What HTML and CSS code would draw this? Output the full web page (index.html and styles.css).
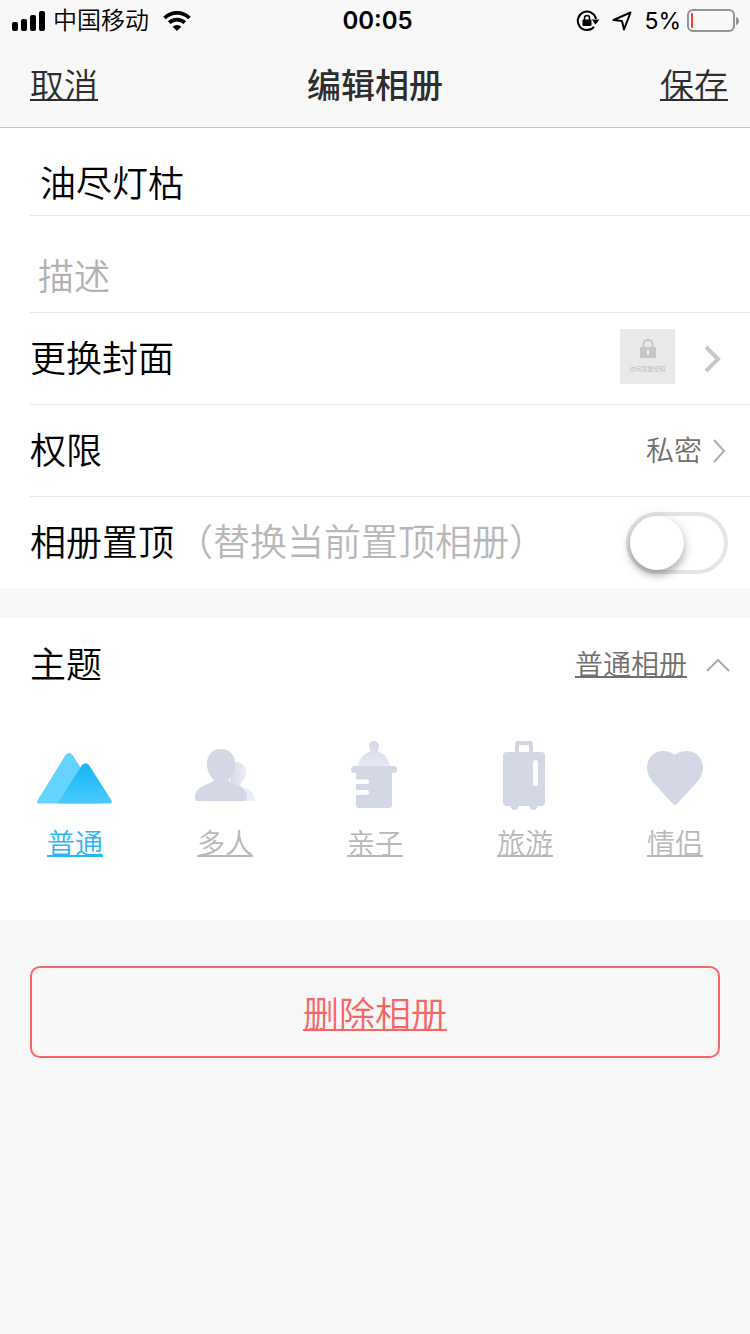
FILE: index.html
```html
<!DOCTYPE html>
<html lang="zh-CN">
<head>
  <meta charset="UTF-8">
  <meta name="viewport" content="width=device-width, initial-scale=1">
  <title>编辑相册</title>
  <link rel="stylesheet" href="styles.css">
</head>
<body>
  <header class="top">
    <div class="status">
      <div class="status-left">
        <svg width="34" height="20" viewBox="0 0 34 20"><rect x="0" y="11" width="6" height="9" rx="2"/><rect x="9" y="8" width="6" height="12" rx="2"/><rect x="18" y="4" width="6" height="16" rx="2"/><rect x="27" y="0" width="6" height="20" rx="2"/></svg>
        <span class="carrier">中国移动</span>
        <svg class="wifi" width="28" height="20" viewBox="0 0 28 20"><path d="M14 20l-4.300-4.300a6.200 6.200 0 0 1 8.600 0z"/><path d="M6.200 11.700a11.300 11.300 0 0 1 15.600 0M1.500 7a18 18 0 0 1 25 0" fill="none" stroke="#000" stroke-width="3.800"/></svg>
      </div>
      <span class="time">00:05</span>
      <div class="status-right">
        <svg class="lock" width="24" height="22" viewBox="0 0 24 22"><path d="M20 9a9.200 9.200 0 1 0-2 7.800" fill="none" stroke="#000" stroke-width="2"/><path d="M15.800 9.500h7.700l-3.900 5z"/><rect x="6.500" y="9.500" width="9" height="6.500" rx="1"/><path d="M8.500 10V8a2.500 2.500 0 0 1 5 0v2" fill="none" stroke="#000" stroke-width="1.500"/></svg>
        <svg class="arrow" width="20" height="20" viewBox="0 0 20 20"><path d="M1.500 9L18.500 1.500 12 18.500 10 10z" fill="none" stroke="#000" stroke-width="2" stroke-linejoin="round"/></svg>
        <span class="percent">5%</span>
        <svg width="52" height="24" viewBox="0 0 52 24"><rect x="1" y="1" width="46" height="21" rx="5" fill="none" stroke="#949494" stroke-width="2"/><rect x="4" y="4" width="2" height="15" rx="1" fill="#ff3b30"/><path d="M49 8q3 1 3 4t-3 4z" fill="#949494"/></svg>
      </div>
    </div>
    <nav class="nav">
      <a href="#cancel">取消</a>
      <h1>编辑相册</h1>
      <a href="#save">保存</a>
    </nav>
  </header>

  <main>
    <section class="card">
      <div class="row row-name">
        <input class="field" type="text" aria-label="相册名称" value="油尽灯枯">
      </div>
      <div class="row row-desc">
        <input class="field" type="text" aria-label="描述" placeholder="描述">
      </div>
      <div class="row">
        <span>更换封面</span>
        <div class="cover">
          <svg width="18" height="20" viewBox="0 0 18 20"><path d="M4.500 9V5.500a4.500 4.500 0 0 1 9 0V9" fill="none" stroke="#c6c6c6" stroke-width="2"/><rect x="1" y="8" width="16" height="11" rx="1" fill="#c6c6c6"/><path d="M9 11v5" stroke="#efefef" stroke-width="2"/></svg>
          <span>访问需要密码</span>
        </div>
        <svg class="chevron-bold" width="18" height="28" viewBox="0 0 18 28"><path d="M2 2l12 12L2 26" fill="none" stroke="#c7c7cc" stroke-width="4"/></svg>
      </div>
      <div class="row">
        <span>权限</span>
        <span class="value">私密</span>
        <svg class="chevron" width="14" height="24" viewBox="0 0 14 24"><path d="M2 1l10 11L2 23" fill="none" stroke="#adadad" stroke-width="2"/></svg>
      </div>
      <div class="row row-last">
        <label for="pin">相册置顶</label>
        <span class="hint">（替换当前置顶相册）</span>
        <input class="switch" type="checkbox" role="switch" id="pin">
      </div>
    </section>

    <section class="card theme">
      <div class="theme-head">
        <h2>主题</h2>
        <a href="#themes">普通相册</a>
        <svg width="24" height="14" viewBox="0 0 24 14"><path d="M1 13L12 2l11 11" fill="none" stroke="#adadad" stroke-width="2"/></svg>
      </div>
      <div class="theme-list">
        <a class="active" href="#normal" aria-current="true">
          <svg width="80" height="76" viewBox="0 0 80 76">
            <defs><linearGradient id="peak" x1="0" y1="0" x2="0" y2="1"><stop offset="0" stop-color="#12b5f5"/><stop offset="1" stop-color="#49caff"/></linearGradient></defs>
            <path d="M30.500 19q3.500-4 7 0L68 66q0 1.500-2 1.500H4q-3 0-1.500-3z" fill="#65d2ff"/>
            <path d="M47 29q3.500-3.500 7 0l22.500 35.500q1 3-1.500 3H22.500z" fill="url(#peak)"/>
          </svg>
          普通
        </a>
        <a href="#group">
          <svg width="80" height="76" viewBox="0 0 80 76">
            <defs><linearGradient id="back" x1="0" y1="0" x2="1" y2="0"><stop offset="0" stop-color="#d8dbe8"/><stop offset="0.700" stop-color="#eceef7"/></linearGradient></defs>
            <path d="M50 26c7 0 11 4 11 10 0 6-3 9-5 11-1 1-1 3 1 4 8 3 13 6 13 14H45V26z" fill="url(#back)"/>
            <path d="M36 13c9 0 14 6 14 15 0 7-3 12-6 15-1 2 0 3 3 4 9 3 15 7 15 14 0 3-1 4-3 4H13c-2 0-3-1-3-4 0-7 6-11 15-14 3-1 4-2 3-4-3-3-6-8-6-15 0-9 5-15 14-15z" fill="#d4d8e5"/>
          </svg>
          多人
        </a>
        <a href="#family">
          <svg width="80" height="76" viewBox="0 0 80 76">
            <defs><linearGradient id="dome" x1="0" y1="0" x2="0" y2="1"><stop offset="0" stop-color="#d4d8e5"/><stop offset="1" stop-color="#e6e9f4"/></linearGradient></defs>
            <path d="M39 5a5 5 0 0 1 4 8v3c6 1 11 7 12 14H23c1-7 6-13 12-14v-3a5 5 0 0 1 4-8z" fill="url(#dome)"/>
            <path d="M19.500 30h39a3.500 3.500 0 0 1 0 7H57v32q0 3-3 3H24q-3 0-3-3V59h11q2 0 2-2.500T32 54H21v-6h11q2 0 2-2.300T32 43.500H21V37h-1.500a3.500 3.500 0 0 1 0-7z" fill="#d4d8e5"/>
          </svg>
          亲子
        </a>
        <a href="#travel">
          <svg width="80" height="76" viewBox="0 0 80 76">
            <path d="M32 18V7h14v11" fill="none" stroke="#d4d8e5" stroke-width="4" stroke-linejoin="round"/>
            <rect x="18" y="16" width="42" height="54" rx="4" fill="#d4d8e5"/>
            <path d="M25 69h9q-1 5-4.500 5T25 69zM44 69h9q-1 5-4.500 5T44 69z" fill="#d4d8e5"/>
            <rect x="48" y="24" width="5" height="26" rx="2.500" fill="#fff"/>
          </svg>
          旅游
        </a>
        <a href="#couple">
          <svg width="80" height="76" viewBox="0 0 80 76">
            <path d="M40 19c4-3 7-4 12-4 9 0 16 7 16 17 0 5-2 9-5 13L42 68q-2 2-4 0L17 45c-3-4-5-8-5-13 0-10 7-17 16-17 5 0 8 1 12 4z" fill="#d4d8e5"/>
          </svg>
          情侣
        </a>
      </div>
    </section>

    <button class="delete" type="button">删除相册</button>
  </main>
</body>
</html>
```
FILE: styles.css
```css
* {
  box-sizing: border-box;
}
body {
  margin: 0;
  min-height: 100vh;
  background-color: #f7f7f7;
  color: #000;
  font-family: Inter, "Noto Sans CJK SC", sans-serif;
  font-size: 36px;
  font-weight: 350;
  line-height: 48px;
}
svg {
  display: block;
  flex: none;
}
a,
.delete {
  text-decoration: underline;
  text-decoration-thickness: 2px;
  text-decoration-skip-ink: none;
  text-underline-offset: 1px;
}
.top {
  background-color: #f8f8f8;
  border-bottom: 1px solid #c4c4c4;
}
.status {
  display: grid;
  grid-template-columns: 1fr auto 1fr;
  align-items: center;
  height: 42px;
  padding: 0 11px 0 12px;
  font-size: 24px;
  line-height: 42px;
}
.status-left,
.status-right {
  display: flex;
  align-items: center;
}
.status-right {
  justify-content: flex-end;
}
.carrier {
  margin-left: 7px;
}
.wifi {
  margin-left: 14px;
}
.time {
  padding-left: 4px;
  font-weight: 600;
}
.lock {
  margin-right: 12px;
}
.arrow {
  margin-right: 12px;
}
.percent {
  margin-right: 6px;
  font-size: 23px;
  font-weight: 400;
}
.nav {
  display: grid;
  grid-template-columns: 1fr auto 1fr;
  align-items: center;
  height: 85px;
  padding: 2px 22px 0;
  font-size: 34px;
}
.nav a {
  color: #2e2e2e;
}
.nav a:first-child {
  margin-left: 8px;
}
.nav a:last-child {
  text-align: right;
}
.nav h1 {
  margin: 0;
  color: #2e2e2e;
  font-size: 34px;
  font-weight: 500;
}
.card {
  background-color: #fff;
}
.row {
  display: flex;
  align-items: center;
  height: 92px;
  margin-left: 30px;
  padding-right: 22px;
  border-bottom: 1px solid #e5e5e5;
}
.row-name {
  height: 88px;
  padding-top: 18px;
}
.row-desc {
  height: 97px;
  padding-top: 26px;
}
.row-last {
  height: 91px;
  border-bottom: none;
}
.field {
  flex: 1;
  min-width: 0;
  height: 60px;
  padding: 0 10px;
  border: none;
  outline: none;
  background: none;
  color: inherit;
  font: inherit;
}
.row-desc .field {
  padding: 0 8px;
}
.field::placeholder {
  color: #b2b2b2;
  opacity: 1;
}
.cover {
  display: flex;
  flex-direction: column;
  align-items: center;
  justify-content: center;
  gap: 2px;
  width: 55px;
  height: 55px;
  margin: 0 0 5px auto;
  padding-top: 4px;
  background-color: #e9e9e9;
}
.cover span {
  color: #b8b8b8;
  font-size: 6px;
  line-height: 16px;
}
.chevron-bold {
  margin: 0 6px 0 29px;
}
.value {
  margin-left: auto;
  color: #707070;
  font-size: 28px;
}
.chevron {
  margin: 0 2px 0 10px;
}
.hint {
  margin-left: 2px;
  color: #b8b8b8;
  font-size: 37px;
}
.switch {
  appearance: none;
  width: 102px;
  height: 62px;
  margin: 0 0 0 auto;
  border: 4px solid #e5e5e5;
  border-radius: 31px;
  background-color: #fff;
}
.switch::before {
  content: '';
  display: block;
  width: 54px;
  height: 54px;
  border-radius: 50%;
  background-color: #fff;
  box-shadow: 0 5px 8px rgba(0, 0, 0, 0.3), 0 0 16px rgba(0, 0, 0, 0.08);
}
.switch:checked {
  background-color: #4cd964;
}
.switch:checked::before {
  margin-left: 40px;
}
.theme {
  margin-top: 30px;
  padding-bottom: 52px;
}
.theme-head {
  display: flex;
  align-items: center;
  height: 94px;
  padding: 0 20px 0 30px;
}
.theme-head h2 {
  margin: 0;
  font-size: 36px;
  font-weight: 350;
}
.theme-head a {
  margin: 0 19px 0 auto;
  color: #707070;
  font-size: 28px;
}
.theme-list {
  display: grid;
  grid-template-columns: repeat(5, 1fr);
  padding-top: 24px;
}
.theme-list a {
  display: flex;
  flex-direction: column;
  align-items: center;
  gap: 8px;
  color: #b8b8b8;
  font-size: 28px;
}
.theme-list .active {
  color: #29b6f6;
}
.delete {
  display: block;
  width: calc(100% - 60px);
  height: 92px;
  margin: 46px 30px;
  border: 2px solid #f76565;
  border-radius: 10px;
  background: none;
  color: #f76565;
  font-family: inherit;
  font-size: 36px;
  font-weight: 350;
}
```
